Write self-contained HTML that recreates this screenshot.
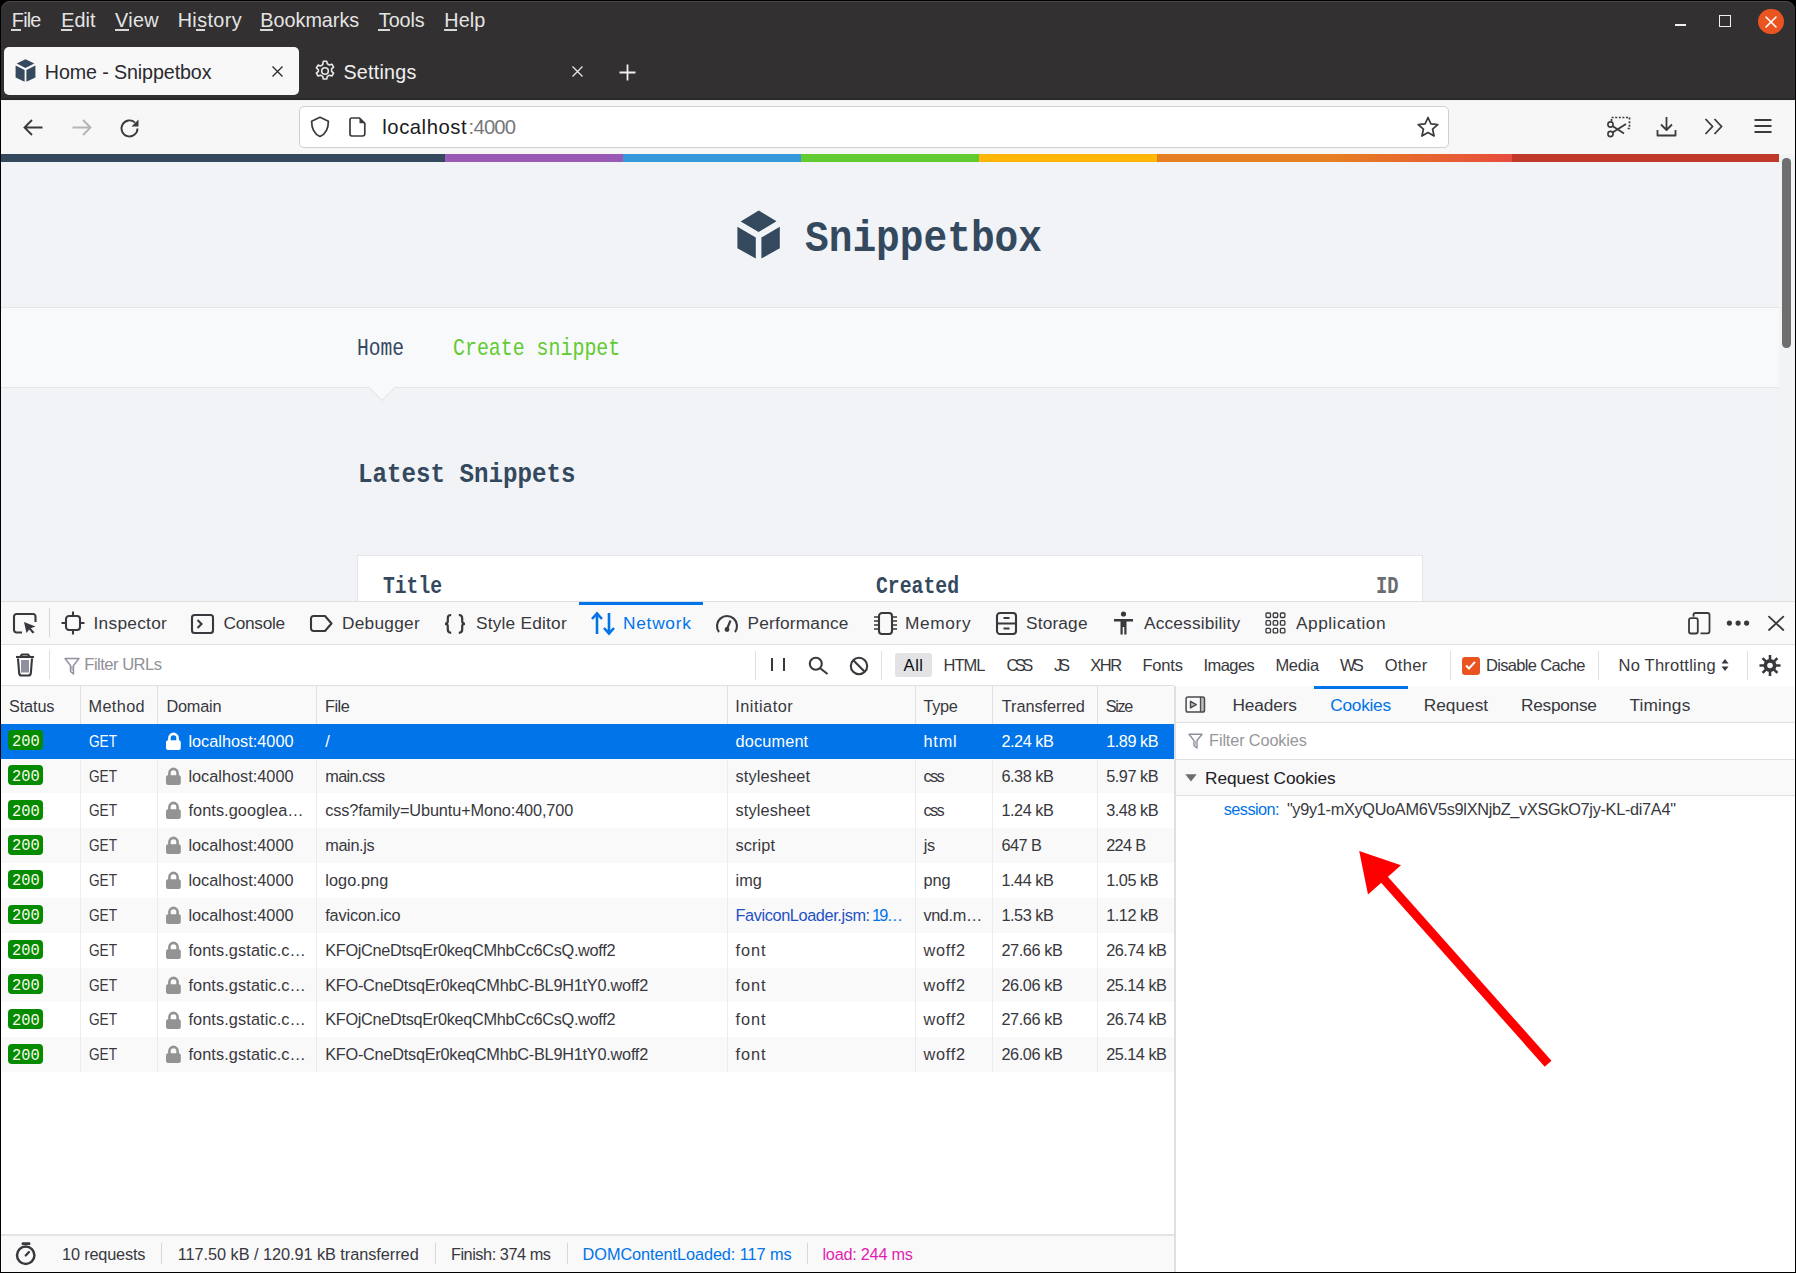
<!DOCTYPE html>
<html><head><meta charset="utf-8">
<style>
*{margin:0;padding:0;box-sizing:border-box}
html,body{width:1796px;height:1273px;overflow:hidden;background:#000}
body{position:relative;font-family:"Liberation Sans",sans-serif}
.a{position:absolute}
.b{position:absolute;line-height:0;white-space:nowrap;color:#38383d}
svg{position:absolute;overflow:visible}
.ic{stroke:#38383d;fill:none;stroke-width:2.1}
.cs{position:absolute;width:1px;background:#ececef}
.rw{position:absolute;left:1px;width:1173px}
.bd{position:absolute;left:8px;width:34.8px;height:19.7px;border-radius:4px;background:#058b00}
.ul{position:absolute;height:2px;background:#d8d8d8}
</style></head><body>
<div class="a" style="left:1px;top:1px;width:1794px;height:1271px;background:#323031;border-radius:9px 9px 0 0;box-shadow:inset 0 1px 0 #4a4849"></div>

<div class="b" style="left:11.85px;top:19.84px;font-size:19.8px;color:#e4e4e4;letter-spacing:-0.793px">File</div>
<div class="ul" style="left:10.5px;top:29px;width:10.899999999999999px"></div>
<div class="b" style="left:61.20px;top:19.84px;font-size:19.8px;color:#e4e4e4;letter-spacing:0.048px">Edit</div>
<div class="ul" style="left:60.5px;top:29px;width:11.5px"></div>
<div class="b" style="left:115.00px;top:19.84px;font-size:19.8px;color:#e4e4e4;letter-spacing:0.343px">View</div>
<div class="ul" style="left:114.5px;top:29px;width:14.5px"></div>
<div class="b" style="left:177.70px;top:19.84px;font-size:19.8px;color:#e4e4e4;letter-spacing:0.387px">History</div>
<div class="ul" style="left:196px;top:29px;width:9px"></div>
<div class="b" style="left:260.30px;top:19.84px;font-size:19.8px;color:#e4e4e4">Bookmarks</div>
<div class="ul" style="left:260px;top:29px;width:13px"></div>
<div class="b" style="left:378.80px;top:19.84px;font-size:19.8px;color:#e4e4e4;letter-spacing:-0.058px">Tools</div>
<div class="ul" style="left:378px;top:29px;width:12px"></div>
<div class="b" style="left:444.30px;top:19.84px;font-size:19.8px;color:#e4e4e4;letter-spacing:0.070px">Help</div>
<div class="ul" style="left:444px;top:29px;width:13px"></div>
<div class="a" style="left:1675px;top:24px;width:11px;height:2px;background:#f0f0f0"></div>
<div class="a" style="left:1719px;top:15px;width:12px;height:12px;border:1.6px solid #f0f0f0"></div>
<div class="a" style="left:1758px;top:8.5px;width:25.5px;height:25.5px;border-radius:50%;background:#e95420"></div>
<svg style="left:1765px;top:16px" width="12" height="12"><path d="M1 1L11 11M11 1L1 11" stroke="#fff" stroke-width="1.6" stroke-linecap="round"/></svg>
<div class="a" style="left:4px;top:46.5px;width:295px;height:48px;background:#f8f8f8;border-radius:5px"></div>
<svg style="left:15px;top:59px" width="21" height="23" viewBox="0 0 21 23"><path fill="#34495e" d="M10.5 0.3L19.3 4.6L10.5 9L1.7 4.6Z M0.6 6.6L9.6 11V22.8L0.6 18.4Z M11.4 11L20.4 6.6V18.4L11.4 22.8Z"/></svg>
<svg style="left:272px;top:65.5px" width="11" height="11"><path d="M0.5 0.5L10.5 10.5M10.5 0.5L0.5 10.5" stroke="#2a2a2e" stroke-width="1.3"/></svg>
<svg style="left:314px;top:60px" width="22" height="22" viewBox="0 0 22 22"><g fill="none" stroke="#e8e8e8" stroke-width="1.6"><circle cx="11" cy="11" r="3.3"/><path d="M9.3 1.2h3.4l0.6 2.6 2.1 1.2 2.5-0.8 1.7 2.9-2 1.8v2.4l2 1.8-1.7 2.9-2.5-0.8-2.1 1.2-0.6 2.6H9.3l-0.6-2.6-2.1-1.2-2.5 0.8-1.7-2.9 2-1.8V9.8l-2-1.8 1.7-2.9 2.5 0.8 2.1-1.2Z" stroke-linejoin="round"/></g></svg>
<svg style="left:572px;top:65.5px" width="11" height="11"><path d="M0.5 0.5L10.5 10.5M10.5 0.5L0.5 10.5" stroke="#e8e8e8" stroke-width="1.3"/></svg>
<svg style="left:619px;top:63.5px" width="17" height="17"><path d="M8.5 0.5V16.5M0.5 8.5H16.5" stroke="#f0f0f0" stroke-width="1.8"/></svg>

<div class="b" style="left:44.80px;top:71.87px;font-size:19.7px;color:#2b2a30;letter-spacing:-0.114px">Home - Snippetbox</div>
<div class="b" style="left:343.40px;top:71.87px;font-size:19.7px;color:#f0f0f0;letter-spacing:0.255px">Settings</div>
<div class="a" style="left:1px;top:97.5px;width:1794px;height:2px;background:#2a2929"></div><div class="a" style="left:1px;top:99.5px;width:1794px;height:54.5px;background:#f7f7f7;border-top:1px solid #ededed"></div>
<svg style="left:23px;top:119px" width="20" height="17" viewBox="0 0 20 17"><path d="M19.5 8.5H2M9 1L1.5 8.5L9 16" fill="none" stroke="#3b3b3b" stroke-width="1.9"/></svg>
<svg style="left:71.5px;top:119px" width="20" height="17" viewBox="0 0 20 17"><path d="M0.5 8.5H18M11 1L18.5 8.5L11 16" fill="none" stroke="#b5b5b8" stroke-width="1.9"/></svg>
<svg style="left:119px;top:117.5px" width="21" height="21" viewBox="0 0 21 21"><path d="M18.5 10.5A8 8 0 1 1 16 4.6" fill="none" stroke="#3b3b3b" stroke-width="1.9"/><path d="M19.5 1.5V8.5H12.5Z" fill="#3b3b3b"/></svg>
<div class="a" style="left:299px;top:105.5px;width:1150px;height:42px;background:#fff;border:1px solid #cfcfd4;border-radius:5px"></div>
<svg style="left:309px;top:116px" width="22" height="22" viewBox="0 0 22 22"><path d="M11 1.2L19.4 5.2C19.4 13 16 18.2 11 20.6C6 18.2 2.6 13 2.6 5.2Z" fill="none" stroke="#3b3b3b" stroke-width="1.7" stroke-linejoin="round"/></svg>
<svg style="left:349px;top:117px" width="17" height="20" viewBox="0 0 17 20"><path d="M2.8 1H10.5L15.8 6.3V16.8A2.2 2.2 0 0 1 13.6 19H2.8A2 2 0 0 1 1 17V3A2 2 0 0 1 2.8 1Z" fill="none" stroke="#3b3b3b" stroke-width="1.7"/><path d="M10.5 1V6.3H15.8Z" fill="#3b3b3b"/></svg>
<svg style="left:1416px;top:115.5px" width="24" height="22" viewBox="0 0 24 22"><path d="M12 1.5L14.9 7.9L21.8 8.6L16.6 13.2L18.1 20L12 16.5L5.9 20L7.4 13.2L2.2 8.6L9.1 7.9Z" fill="none" stroke="#3b3b3b" stroke-width="1.7" stroke-linejoin="round"/></svg>
<svg style="left:1606px;top:116px" width="25" height="22" viewBox="0 0 25 22"><path d="M5.5 5V1.5H23.5V12.5H20" fill="none" stroke="#3b3b3b" stroke-width="1.7" stroke-dasharray="2 1.6"/><circle cx="4.5" cy="18" r="2.6" fill="none" stroke="#3b3b3b" stroke-width="1.6"/><circle cx="4.5" cy="8.5" r="2.6" fill="none" stroke="#3b3b3b" stroke-width="1.6"/><path d="M6.5 16.5L20 8M6.5 10L18 17.5" stroke="#3b3b3b" stroke-width="1.8"/></svg>
<svg style="left:1656px;top:115.5px" width="21" height="21" viewBox="0 0 21 21"><path d="M10.5 1V14M5 8.5L10.5 14L16 8.5M1.5 14V19.5H19.5V14" fill="none" stroke="#3b3b3b" stroke-width="1.8" stroke-linejoin="round"/></svg>
<svg style="left:1704px;top:118px" width="20" height="17" viewBox="0 0 20 17"><path d="M1.5 1L8.5 8.5L1.5 16M10.5 1L17.5 8.5L10.5 16" fill="none" stroke="#3b3b3b" stroke-width="1.8"/></svg>
<svg style="left:1754px;top:119px" width="18" height="14" viewBox="0 0 18 14"><path d="M0.5 1H17.5M0.5 7H17.5M0.5 13H17.5" stroke="#3b3b3b" stroke-width="1.8"/></svg>

<div class="b" style="left:382.30px;top:127.37px;font-size:20.3px;color:#1c1b22;letter-spacing:0.527px">localhost</div>
<div class="b" style="left:468.60px;top:127.37px;font-size:20.3px;color:#77777c;letter-spacing:-0.813px">:4000</div>
<div class="a" style="left:1px;top:154px;width:1778px;height:447px;background:#F1F3F6"></div>
<div class="a" style="left:1px;top:154px;width:1778px;height:8.3px;background:linear-gradient(to right,#34495e,#34495e 25%,#9b59b6 25%,#9b59b6 35%,#3498db 35%,#3498db 45%,#62cb31 45%,#62cb31 55%,#ffb606 55%,#ffb606 65%,#e67e22 65%,#e67e22 75%,#e74c3c 85%,#e74c3c 85%,#c0392b 85%,#c0392b 100%)"></div>
<div class="a" style="left:1px;top:306.7px;width:1778px;height:81.3px;background:#F7F9FA;border-top:1.33px solid #E4E5E7;border-bottom:1.33px solid #E4E5E7"></div>
<svg style="left:737px;top:210px" width="44" height="49" viewBox="737 210 44 49"><path fill="#34495e" d="M758.75 210.5L776.5 221.3L758.6 231.9L740.7 221.5Z M737.4 226.8L755.8 237.5V258.5L737.4 248.3Z M761.4 237.5L779.8 226.8V248.3L761.4 258.5Z"/></svg>
<div class="a" style="left:372px;top:377.3px;width:20px;height:20px;background:#F7F9FA;border-left:1.33px solid #E4E5E7;border-bottom:1.33px solid #E4E5E7;transform:rotate(-45deg)"></div>
<div class="a" style="left:357px;top:555px;width:1066px;height:60px;background:#fff;border:1.33px solid #E4E5E7"></div>

<div class="b" style="left:805.00px;top:239.15px;font-size:44.8px;color:#34495e;font-weight:bold;font-family:'Liberation Mono',monospace;transform:scaleX(0.8817);transform-origin:0.00px 0">Snippetbox</div>
<div class="b" style="left:357.00px;top:349.46px;font-size:24px;color:#34495e;font-family:'Liberation Mono',monospace;transform:scaleX(0.8177);transform-origin:0.00px 0">Home</div>
<div class="b" style="left:453.20px;top:349.46px;font-size:24px;color:#62cb31;font-family:'Liberation Mono',monospace;transform:scaleX(0.8294);transform-origin:0.00px 0">Create snippet</div>
<div class="b" style="left:358.00px;top:475.29px;font-size:28.5px;color:#34495e;font-weight:bold;font-family:'Liberation Mono',monospace;transform:scaleX(0.8480);transform-origin:0.00px 0">Latest Snippets</div>
<div class="b" style="left:382.50px;top:586.66px;font-size:24px;color:#34495e;font-weight:bold;font-family:'Liberation Mono',monospace;transform:scaleX(0.8194);transform-origin:0.00px 0">Title</div>
<div class="b" style="left:875.50px;top:586.66px;font-size:24px;color:#34495e;font-weight:bold;font-family:'Liberation Mono',monospace;transform:scaleX(0.8234);transform-origin:0.00px 0">Created</div>
<div class="b" style="left:1376.00px;top:586.66px;font-size:24px;color:#6A6C6F;font-weight:bold;font-family:'Liberation Mono',monospace;transform:scaleX(0.7813);transform-origin:0.00px 0">ID</div>
<div class="a" style="left:1779px;top:154px;width:16px;height:447px;background:#f2f3f5"></div>
<div class="a" style="left:1782.4px;top:158.3px;width:8.3px;height:190px;background:#6e6e6e;border-radius:4.2px"></div>

<div class="a" style="left:1px;top:601px;width:1794px;height:671px;background:#fff;border-top:1px solid #dfdfe2"></div>
<div class="a" style="left:1px;top:602px;width:1794px;height:43px;background:#f9f9fa;border-bottom:1px solid #e0e0e2"></div>
<svg style="left:13px;top:613px" width="24" height="21" viewBox="0 0 24 21"><path d="M9 19.5H3.5A2.5 2.5 0 0 1 1 17V3.5A2.5 2.5 0 0 1 3.5 1H20A2.5 2.5 0 0 1 22.5 3.5V9" class="ic"/><path d="M11 9L22.5 13.5L17.8 15.3L21.5 19.3L19.6 20.6L16.2 16.6L13.5 20Z" fill="#38383d"/></svg>
<div class="a" style="left:48.5px;top:608px;width:1px;height:29px;background:#d7d7db"></div>
<svg style="left:61px;top:611px" width="24" height="24" viewBox="0 0 24 24"><rect x="5" y="5" width="14" height="14" rx="3" class="ic"/><path d="M12 0.5V5M12 19V23.5M0.5 12H5M19 12H23.5" class="ic"/></svg>
<svg style="left:191px;top:613.5px" width="23" height="20" viewBox="0 0 23 20"><rect x="1" y="1" width="21" height="18" rx="2.5" class="ic"/><path d="M6.5 6L10.5 10L6.5 14" class="ic"/></svg>
<svg style="left:309.5px;top:615px" width="23" height="17" viewBox="0 0 23 17"><path d="M1 3.5A2.5 2.5 0 0 1 3.5 1H15L21.5 8.5L15 16H3.5A2.5 2.5 0 0 1 1 13.5Z" class="ic" stroke-linejoin="round"/></svg>
<svg style="left:444px;top:613.5px" width="23" height="20" viewBox="0 0 23 20"><path d="M7.2 1C4.6 1 3.8 2 3.8 4.3V7.3C3.8 9 3 9.8 1 9.8C3 9.8 3.8 10.6 3.8 12.3V15.5C3.8 17.8 4.6 18.8 7.2 18.8M14.8 1C17.4 1 18.2 2 18.2 4.3V7.3C18.2 9 19 9.8 21 9.8C19 9.8 18.2 10.6 18.2 12.3V15.5C18.2 17.8 17.4 18.8 14.8 18.8" fill="none" stroke="#38383d" stroke-width="2.2"/></svg>
<div class="a" style="left:579px;top:602px;width:124px;height:3px;background:#0074e8"></div>
<svg style="left:591px;top:612px" width="24" height="23" viewBox="0 0 24 23"><path d="M6 22V2M1 7L6 1.5L11 7M18 1V21M13 16L18 21.5L23 16" fill="none" stroke="#0074e8" stroke-width="2.6"/></svg>
<svg style="left:715px;top:612px" width="24" height="22" viewBox="0 0 24 22"><path d="M4 20A10 10 0 1 1 20 20" class="ic"/><path d="M12 17L15.5 8.5" class="ic"/><circle cx="12" cy="17.5" r="2.4" fill="#38383d"/></svg>
<svg style="left:872.5px;top:612px" width="25" height="23" viewBox="0 0 25 23"><rect x="6" y="1" width="13" height="21" rx="3" class="ic"/><path d="M1 5H6M1 9H6M1 13H6M1 17H6M19 5H24M19 9H24M19 13H24M19 17H24" stroke="#38383d" stroke-width="1.3"/></svg>
<svg style="left:996px;top:612px" width="21" height="23" viewBox="0 0 21 23"><rect x="1" y="1" width="19" height="21" rx="3" class="ic"/><path d="M1 11.5H20M7.5 6H13.5M7.5 16.5H13.5" class="ic"/></svg>
<svg style="left:1113px;top:611px" width="21" height="24" viewBox="0 0 21 24"><circle cx="10.5" cy="3" r="2.6" fill="#38383d"/><path d="M1 8H20V10.5H13.5V23.5H11.3V16H9.7V23.5H7.5V10.5H1Z" fill="#38383d"/></svg>
<svg style="left:1265px;top:612px" width="21" height="22" viewBox="0 0 21 22"><g fill="none" stroke="#38383d" stroke-width="1.3"><rect x="1" y="1" width="4.5" height="4.5" rx="1"/><rect x="8.2" y="1" width="4.5" height="4.5" rx="1"/><rect x="15.4" y="1" width="4.5" height="4.5" rx="1"/><rect x="1" y="8.7" width="4.5" height="4.5" rx="1"/><rect x="8.2" y="8.7" width="4.5" height="4.5" rx="1"/><rect x="15.4" y="8.7" width="4.5" height="4.5" rx="1"/><rect x="1" y="16.4" width="4.5" height="4.5" rx="1"/><rect x="8.2" y="16.4" width="4.5" height="4.5" rx="1"/><rect x="15.4" y="16.4" width="4.5" height="4.5" rx="1"/></g></svg>
<svg style="left:0;top:0" width="1796" height="700" viewBox="0 0 1796 700"><rect x="1689" y="618.2" width="8.8" height="15.3" rx="2" fill="none" stroke="#38383d" stroke-width="1.8"/><path d="M1693.5 616.8V615A2 2 0 0 1 1695.5 613H1707.5A2 2 0 0 1 1709.5 615V631.3A2 2 0 0 1 1707.5 633.3H1700.5" fill="none" stroke="#38383d" stroke-width="1.8"/><circle cx="1729.4" cy="623.1" r="2.6" fill="#38383d"/><circle cx="1738.1" cy="623.1" r="2.6" fill="#38383d"/><circle cx="1746.6" cy="623.1" r="2.6" fill="#38383d"/><path d="M1769 616.6L1783.3 630M1783.3 616.6L1769 630" stroke="#38383d" stroke-width="1.8" stroke-linecap="round"/></svg>

<div class="b" style="left:93.50px;top:623.31px;font-size:17.3px;color:#38383d;letter-spacing:0.276px">Inspector</div>
<div class="b" style="left:223.50px;top:623.31px;font-size:17.3px;color:#38383d;letter-spacing:-0.282px">Console</div>
<div class="b" style="left:342.00px;top:623.31px;font-size:17.3px;color:#38383d;letter-spacing:0.250px">Debugger</div>
<div class="b" style="left:475.90px;top:623.31px;font-size:17.3px;color:#38383d;letter-spacing:0.219px">Style Editor</div>
<div class="b" style="left:623.10px;top:623.31px;font-size:17.3px;color:#0074e8;letter-spacing:0.720px">Network</div>
<div class="b" style="left:747.40px;top:623.31px;font-size:17.3px;color:#38383d;letter-spacing:0.216px">Performance</div>
<div class="b" style="left:905.10px;top:623.31px;font-size:17.3px;color:#38383d;letter-spacing:0.609px">Memory</div>
<div class="b" style="left:1026.00px;top:623.31px;font-size:17.3px;color:#38383d;letter-spacing:0.161px">Storage</div>
<div class="b" style="left:1144.00px;top:623.31px;font-size:17.3px;color:#38383d;letter-spacing:0.175px">Accessibility</div>
<div class="b" style="left:1296.00px;top:623.31px;font-size:17.3px;color:#38383d;letter-spacing:0.500px">Application</div>
<svg style="left:15px;top:652px" width="20" height="25" viewBox="0 0 20 25"><path d="M5.5 4.5L7 2.5H13L14.5 4.5" class="ic"/><path d="M1 5H19" class="ic" stroke-width="2"/><path d="M3 6.5L4.2 21.5A2.5 2.5 0 0 0 6.7 23.5H13.3A2.5 2.5 0 0 0 15.8 21.5L17 6.5" class="ic" stroke-width="2.2"/><rect x="6" y="8" width="8" height="12.5" fill="#8f8f9d"/></svg>
<div class="a" style="left:48.5px;top:650px;width:1px;height:29px;background:#e0e0e2"></div>
<svg style="left:64px;top:656.5px" width="16" height="18" viewBox="0 0 16 18"><path d="M1 1.5H15L9.5 8.5V17L6.5 14.5V8.5Z" fill="none" stroke="#8f8f9d" stroke-width="1.4" stroke-linejoin="round"/><path d="M7 9H9.2V14.5L7 12.8Z" fill="#b9b9c0"/></svg>
<div class="a" style="left:754.5px;top:650.5px;width:1px;height:29px;background:#e0e0e2"></div>
<div class="a" style="left:770.5px;top:658px;width:2.2px;height:13px;background:#38383d"></div>
<div class="a" style="left:782.5px;top:658px;width:2.2px;height:13px;background:#38383d"></div>
<svg style="left:807.5px;top:656px" width="22" height="19" viewBox="0 0 22 19"><circle cx="7.8" cy="7.8" r="6" class="ic" stroke-width="2.2"/><path d="M12.2 12.2L19.5 18" class="ic" stroke-width="2.6"/></svg>
<svg style="left:849px;top:656px" width="20" height="20" viewBox="0 0 20 20"><circle cx="10" cy="10" r="8.2" class="ic" stroke-width="2.6"/><path d="M4.3 4.3L15.7 15.7" class="ic" stroke-width="2.6"/></svg>
<div class="a" style="left:881px;top:650.5px;width:1px;height:29px;background:#e0e0e2"></div>
<div class="a" style="left:895px;top:653px;width:37px;height:24px;background:#e3e3e6;border-radius:3px"></div>
<div class="a" style="left:1449.5px;top:650.5px;width:1px;height:29px;background:#e0e0e2"></div>
<div class="a" style="left:1461.5px;top:656.5px;width:18px;height:18px;background:#e95420;border-radius:3px"></div>
<svg style="left:1463px;top:658px" width="15" height="15" viewBox="0 0 15 15"><path d="M3 7.5L6 10.5L12 3.8" fill="none" stroke="#fff" stroke-width="2"/></svg>
<div class="a" style="left:1598px;top:650.5px;width:1px;height:29px;background:#e0e0e2"></div>
<svg style="left:1721px;top:658px" width="8" height="14" viewBox="0 0 8 14"><path d="M4 1L7.5 5.5H0.5Z M4 13L7.5 8.5H0.5Z" fill="#38383d"/></svg>
<div class="a" style="left:1747px;top:650.5px;width:1px;height:29px;background:#e0e0e2"></div>
<svg style="left:1759px;top:654px" width="22" height="23" viewBox="0 0 22 23"><g fill="#38383d"><circle cx="11" cy="11.5" r="6.5"/></g><g stroke="#38383d" stroke-width="2.6"><path d="M11 1V22M0.5 11.5H21.5M3.6 4.1L18.4 18.9M18.4 4.1L3.6 18.9"/></g><circle cx="11" cy="11.5" r="2.8" fill="#f9f9fa"/></svg>

<div class="b" style="left:84.30px;top:664.65px;font-size:16.6px;color:#909096;letter-spacing:-0.520px">Filter URLs</div>
<div class="b" style="left:903.60px;top:664.68px;font-size:16.5px;color:#0c0c0d;letter-spacing:0.542px">All</div>
<div class="b" style="left:943.50px;top:664.68px;font-size:16.5px;color:#38383d;letter-spacing:-0.960px">HTML</div>
<div class="b" style="left:1006.40px;top:664.68px;font-size:16.5px;color:#38383d;letter-spacing:-3.504px">CSS</div>
<div class="b" style="left:1054.00px;top:664.68px;font-size:16.5px;color:#38383d;letter-spacing:-3.223px">JS</div>
<div class="b" style="left:1090.30px;top:664.68px;font-size:16.5px;color:#38383d;letter-spacing:-1.458px">XHR</div>
<div class="b" style="left:1142.40px;top:664.68px;font-size:16.5px;color:#38383d;letter-spacing:-0.162px">Fonts</div>
<div class="b" style="left:1203.50px;top:664.68px;font-size:16.5px;color:#38383d;letter-spacing:-0.564px">Images</div>
<div class="b" style="left:1275.40px;top:664.68px;font-size:16.5px;color:#38383d;letter-spacing:-0.311px">Media</div>
<div class="b" style="left:1340.00px;top:664.68px;font-size:16.5px;color:#38383d;letter-spacing:-2.865px">WS</div>
<div class="b" style="left:1384.70px;top:664.68px;font-size:16.5px;color:#38383d;letter-spacing:0.312px">Other</div>
<div class="b" style="left:1485.90px;top:664.68px;font-size:16.5px;color:#38383d;letter-spacing:-0.653px">Disable Cache</div>
<div class="b" style="left:1618.50px;top:664.68px;font-size:16.5px;color:#38383d;letter-spacing:0.247px">No Throttling</div>
<div class="a" style="left:1px;top:686px;width:1173px;height:37.7px;background:#f9f9fa"></div>
<div class="b" style="left:9.00px;top:706.15px;font-size:16.3px;color:#38383d;letter-spacing:-0.142px">Status</div>
<div class="b" style="left:88.50px;top:706.15px;font-size:16.3px;color:#38383d;letter-spacing:0.368px">Method</div>
<div class="b" style="left:166.40px;top:706.15px;font-size:16.3px;color:#38383d;letter-spacing:-0.211px">Domain</div>
<div class="b" style="left:325.00px;top:706.15px;font-size:16.3px;color:#38383d;letter-spacing:-0.481px">File</div>
<div class="b" style="left:735.20px;top:706.15px;font-size:16.3px;color:#38383d;letter-spacing:0.517px">Initiator</div>
<div class="b" style="left:923.60px;top:706.15px;font-size:16.3px;color:#38383d;letter-spacing:-0.357px">Type</div>
<div class="b" style="left:1001.70px;top:706.15px;font-size:16.3px;color:#38383d;letter-spacing:-0.032px">Transferred</div>
<div class="b" style="left:1105.80px;top:706.15px;font-size:16.3px;color:#38383d;letter-spacing:-1.368px">Size</div>
<div class="rw" style="top:723.70px;height:34.85px;background:#0074e8"></div>
<div class="rw" style="top:758.55px;height:34.85px;background:#f9f9fa"></div>
<div class="rw" style="top:793.40px;height:34.85px;background:#fff"></div>
<div class="rw" style="top:828.25px;height:34.85px;background:#f9f9fa"></div>
<div class="rw" style="top:863.10px;height:34.85px;background:#fff"></div>
<div class="rw" style="top:897.95px;height:34.85px;background:#f9f9fa"></div>
<div class="rw" style="top:932.80px;height:34.85px;background:#fff"></div>
<div class="rw" style="top:967.65px;height:34.85px;background:#f9f9fa"></div>
<div class="rw" style="top:1002.50px;height:34.85px;background:#fff"></div>
<div class="rw" style="top:1037.35px;height:34.85px;background:#f9f9fa"></div>
<div class="cs" style="left:79.7px;top:686px;height:37.7px;background:#e0e0e2"></div>
<div class="cs" style="left:79.7px;top:758.6px;height:313.7px"></div>
<div class="cs" style="left:157.2px;top:686px;height:37.7px;background:#e0e0e2"></div>
<div class="cs" style="left:157.2px;top:758.6px;height:313.7px"></div>
<div class="cs" style="left:315.9px;top:686px;height:37.7px;background:#e0e0e2"></div>
<div class="cs" style="left:315.9px;top:758.6px;height:313.7px"></div>
<div class="cs" style="left:727.1px;top:686px;height:37.7px;background:#e0e0e2"></div>
<div class="cs" style="left:727.1px;top:758.6px;height:313.7px"></div>
<div class="cs" style="left:914.8px;top:686px;height:37.7px;background:#e0e0e2"></div>
<div class="cs" style="left:914.8px;top:758.6px;height:313.7px"></div>
<div class="cs" style="left:992.0px;top:686px;height:37.7px;background:#e0e0e2"></div>
<div class="cs" style="left:992.0px;top:758.6px;height:313.7px"></div>
<div class="cs" style="left:1097.0px;top:686px;height:37.7px;background:#e0e0e2"></div>
<div class="cs" style="left:1097.0px;top:758.6px;height:313.7px"></div>
<div class="a" style="left:1px;top:685px;width:1173px;height:1px;background:#e0e0e2"></div>
<div class="bd" style="top:730.40px"></div>
<div class="b" style="left:12.40px;top:741.93px;font-size:16.8px;color:#fafaf0;font-family:'Liberation Mono',monospace;transform:scaleX(0.9160);transform-origin:0.00px 0">200</div>
<div class="b" style="left:88.80px;top:740.65px;font-size:16.3px;color:#fff;transform:scaleX(0.8389);transform-origin:0.00px 0">GET</div>
<svg style="left:166px;top:731.70px" width="15" height="18" viewBox="0 0 15 18"><path d="M3.4 9V6A4.1 4.1 0 0 1 11.6 6V9" fill="none" stroke="#fff" stroke-width="2.6"/><rect x="0" y="8.3" width="14.8" height="9.6" rx="2" fill="#fff"/></svg>
<div class="b" style="left:188.40px;top:740.65px;font-size:16.3px;color:#fff;letter-spacing:0.013px">localhost:4000</div>
<div class="b" style="left:325.20px;top:740.65px;font-size:16.3px;color:#fff">/</div>
<div class="b" style="left:735.50px;top:740.65px;font-size:16.3px;color:#fff;letter-spacing:0.163px">document</div>
<div class="b" style="left:923.40px;top:740.65px;font-size:16.3px;color:#fff;letter-spacing:0.864px">html</div>
<div class="b" style="left:1001.40px;top:740.65px;font-size:16.3px;color:#fff;letter-spacing:-0.460px">2.24 kB</div>
<div class="b" style="left:1106.20px;top:740.65px;font-size:16.3px;color:#fff;letter-spacing:-0.460px">1.89 kB</div>
<div class="bd" style="top:765.25px"></div>
<div class="b" style="left:12.40px;top:776.78px;font-size:16.8px;color:#fafaf0;font-family:'Liberation Mono',monospace;transform:scaleX(0.9160);transform-origin:0.00px 0">200</div>
<div class="b" style="left:88.80px;top:775.50px;font-size:16.3px;color:#38383d;transform:scaleX(0.8389);transform-origin:0.00px 0">GET</div>
<svg style="left:166px;top:766.55px" width="15" height="18" viewBox="0 0 15 18"><path d="M3.4 9V6A4.1 4.1 0 0 1 11.6 6V9" fill="none" stroke="#939393" stroke-width="2.6"/><rect x="0" y="8.3" width="14.8" height="9.6" rx="2" fill="#939393"/></svg>
<div class="b" style="left:188.40px;top:775.50px;font-size:16.3px;color:#38383d;letter-spacing:0.013px">localhost:4000</div>
<div class="b" style="left:325.20px;top:775.50px;font-size:16.3px;color:#38383d;letter-spacing:-0.600px">main.css</div>
<div class="b" style="left:735.50px;top:775.50px;font-size:16.3px;color:#38383d;letter-spacing:0.141px">stylesheet</div>
<div class="b" style="left:923.40px;top:775.50px;font-size:16.3px;color:#38383d;letter-spacing:-1.575px">css</div>
<div class="b" style="left:1001.40px;top:775.50px;font-size:16.3px;color:#38383d;letter-spacing:-0.460px">6.38 kB</div>
<div class="b" style="left:1106.20px;top:775.50px;font-size:16.3px;color:#38383d;letter-spacing:-0.460px">5.97 kB</div>
<div class="bd" style="top:800.10px"></div>
<div class="b" style="left:12.40px;top:811.63px;font-size:16.8px;color:#fafaf0;font-family:'Liberation Mono',monospace;transform:scaleX(0.9160);transform-origin:0.00px 0">200</div>
<div class="b" style="left:88.80px;top:810.35px;font-size:16.3px;color:#38383d;transform:scaleX(0.8389);transform-origin:0.00px 0">GET</div>
<svg style="left:166px;top:801.40px" width="15" height="18" viewBox="0 0 15 18"><path d="M3.4 9V6A4.1 4.1 0 0 1 11.6 6V9" fill="none" stroke="#939393" stroke-width="2.6"/><rect x="0" y="8.3" width="14.8" height="9.6" rx="2" fill="#939393"/></svg>
<div class="b" style="left:188.40px;top:810.35px;font-size:16.3px;color:#38383d;letter-spacing:0.086px">fonts.googlea…</div>
<div class="b" style="left:325.20px;top:810.35px;font-size:16.3px;color:#38383d;letter-spacing:-0.121px">css?family=Ubuntu+Mono:400,700</div>
<div class="b" style="left:735.50px;top:810.35px;font-size:16.3px;color:#38383d;letter-spacing:0.141px">stylesheet</div>
<div class="b" style="left:923.40px;top:810.35px;font-size:16.3px;color:#38383d;letter-spacing:-1.575px">css</div>
<div class="b" style="left:1001.40px;top:810.35px;font-size:16.3px;color:#38383d;letter-spacing:-0.460px">1.24 kB</div>
<div class="b" style="left:1106.20px;top:810.35px;font-size:16.3px;color:#38383d;letter-spacing:-0.460px">3.48 kB</div>
<div class="bd" style="top:834.95px"></div>
<div class="b" style="left:12.40px;top:846.48px;font-size:16.8px;color:#fafaf0;font-family:'Liberation Mono',monospace;transform:scaleX(0.9160);transform-origin:0.00px 0">200</div>
<div class="b" style="left:88.80px;top:845.20px;font-size:16.3px;color:#38383d;transform:scaleX(0.8389);transform-origin:0.00px 0">GET</div>
<svg style="left:166px;top:836.25px" width="15" height="18" viewBox="0 0 15 18"><path d="M3.4 9V6A4.1 4.1 0 0 1 11.6 6V9" fill="none" stroke="#939393" stroke-width="2.6"/><rect x="0" y="8.3" width="14.8" height="9.6" rx="2" fill="#939393"/></svg>
<div class="b" style="left:188.40px;top:845.20px;font-size:16.3px;color:#38383d;letter-spacing:0.013px">localhost:4000</div>
<div class="b" style="left:325.20px;top:845.20px;font-size:16.3px;color:#38383d;letter-spacing:-0.345px">main.js</div>
<div class="b" style="left:735.50px;top:845.20px;font-size:16.3px;color:#38383d;letter-spacing:0.129px">script</div>
<div class="b" style="left:923.81px;top:845.20px;font-size:16.3px;color:#38383d;letter-spacing:-0.344px">js</div>
<div class="b" style="left:1001.40px;top:845.20px;font-size:16.3px;color:#38383d;letter-spacing:-0.506px">647 B</div>
<div class="b" style="left:1106.20px;top:845.20px;font-size:16.3px;color:#38383d;letter-spacing:-0.656px">224 B</div>
<div class="bd" style="top:869.80px"></div>
<div class="b" style="left:12.40px;top:881.33px;font-size:16.8px;color:#fafaf0;font-family:'Liberation Mono',monospace;transform:scaleX(0.9160);transform-origin:0.00px 0">200</div>
<div class="b" style="left:88.80px;top:880.05px;font-size:16.3px;color:#38383d;transform:scaleX(0.8389);transform-origin:0.00px 0">GET</div>
<svg style="left:166px;top:871.10px" width="15" height="18" viewBox="0 0 15 18"><path d="M3.4 9V6A4.1 4.1 0 0 1 11.6 6V9" fill="none" stroke="#939393" stroke-width="2.6"/><rect x="0" y="8.3" width="14.8" height="9.6" rx="2" fill="#939393"/></svg>
<div class="b" style="left:188.40px;top:880.05px;font-size:16.3px;color:#38383d;letter-spacing:0.013px">localhost:4000</div>
<div class="b" style="left:325.20px;top:880.05px;font-size:16.3px;color:#38383d;letter-spacing:0.084px">logo.png</div>
<div class="b" style="left:735.50px;top:880.05px;font-size:16.3px;color:#38383d;letter-spacing:0.028px">img</div>
<div class="b" style="left:923.40px;top:880.05px;font-size:16.3px;color:#38383d;letter-spacing:-0.060px">png</div>
<div class="b" style="left:1001.40px;top:880.05px;font-size:16.3px;color:#38383d;letter-spacing:-0.460px">1.44 kB</div>
<div class="b" style="left:1106.20px;top:880.05px;font-size:16.3px;color:#38383d;letter-spacing:-0.460px">1.05 kB</div>
<div class="bd" style="top:904.65px"></div>
<div class="b" style="left:12.40px;top:916.18px;font-size:16.8px;color:#fafaf0;font-family:'Liberation Mono',monospace;transform:scaleX(0.9160);transform-origin:0.00px 0">200</div>
<div class="b" style="left:88.80px;top:914.90px;font-size:16.3px;color:#38383d;transform:scaleX(0.8389);transform-origin:0.00px 0">GET</div>
<svg style="left:166px;top:905.95px" width="15" height="18" viewBox="0 0 15 18"><path d="M3.4 9V6A4.1 4.1 0 0 1 11.6 6V9" fill="none" stroke="#939393" stroke-width="2.6"/><rect x="0" y="8.3" width="14.8" height="9.6" rx="2" fill="#939393"/></svg>
<div class="b" style="left:188.40px;top:914.90px;font-size:16.3px;color:#38383d;letter-spacing:0.013px">localhost:4000</div>
<div class="b" style="left:325.20px;top:914.90px;font-size:16.3px;color:#38383d;letter-spacing:-0.152px">favicon.ico</div>
<div class="b" style="left:735.50px;top:914.90px;font-size:16.3px;color:#1f50c4;letter-spacing:-0.384px">FaviconLoader.jsm:</div>
<div class="b" style="left:872.00px;top:914.90px;font-size:16.3px;color:#0074e8;letter-spacing:-1.697px">19…</div>
<div class="b" style="left:923.40px;top:914.90px;font-size:16.3px;color:#38383d;letter-spacing:-0.364px">vnd.m…</div>
<div class="b" style="left:1001.40px;top:914.90px;font-size:16.3px;color:#38383d;letter-spacing:-0.460px">1.53 kB</div>
<div class="b" style="left:1106.20px;top:914.90px;font-size:16.3px;color:#38383d;letter-spacing:-0.460px">1.12 kB</div>
<div class="bd" style="top:939.50px"></div>
<div class="b" style="left:12.40px;top:951.03px;font-size:16.8px;color:#fafaf0;font-family:'Liberation Mono',monospace;transform:scaleX(0.9160);transform-origin:0.00px 0">200</div>
<div class="b" style="left:88.80px;top:949.75px;font-size:16.3px;color:#38383d;transform:scaleX(0.8389);transform-origin:0.00px 0">GET</div>
<svg style="left:166px;top:940.80px" width="15" height="18" viewBox="0 0 15 18"><path d="M3.4 9V6A4.1 4.1 0 0 1 11.6 6V9" fill="none" stroke="#939393" stroke-width="2.6"/><rect x="0" y="8.3" width="14.8" height="9.6" rx="2" fill="#939393"/></svg>
<div class="b" style="left:188.40px;top:949.75px;font-size:16.3px;color:#38383d;letter-spacing:0.108px">fonts.gstatic.c…</div>
<div class="b" style="left:325.20px;top:949.75px;font-size:16.3px;color:#38383d;letter-spacing:-0.306px">KFOjCneDtsqEr0keqCMhbCc6CsQ.woff2</div>
<div class="b" style="left:735.50px;top:949.75px;font-size:16.3px;color:#38383d;letter-spacing:0.960px">font</div>
<div class="b" style="left:923.48px;top:949.75px;font-size:16.3px;color:#38383d;letter-spacing:0.722px">woff2</div>
<div class="b" style="left:1001.40px;top:949.75px;font-size:16.3px;color:#38383d;letter-spacing:-0.415px">27.66 kB</div>
<div class="b" style="left:1106.20px;top:949.75px;font-size:16.3px;color:#38383d;letter-spacing:-0.501px">26.74 kB</div>
<div class="bd" style="top:974.35px"></div>
<div class="b" style="left:12.40px;top:985.88px;font-size:16.8px;color:#fafaf0;font-family:'Liberation Mono',monospace;transform:scaleX(0.9160);transform-origin:0.00px 0">200</div>
<div class="b" style="left:88.80px;top:984.60px;font-size:16.3px;color:#38383d;transform:scaleX(0.8389);transform-origin:0.00px 0">GET</div>
<svg style="left:166px;top:975.65px" width="15" height="18" viewBox="0 0 15 18"><path d="M3.4 9V6A4.1 4.1 0 0 1 11.6 6V9" fill="none" stroke="#939393" stroke-width="2.6"/><rect x="0" y="8.3" width="14.8" height="9.6" rx="2" fill="#939393"/></svg>
<div class="b" style="left:188.40px;top:984.60px;font-size:16.3px;color:#38383d;letter-spacing:0.108px">fonts.gstatic.c…</div>
<div class="b" style="left:325.20px;top:984.60px;font-size:16.3px;color:#38383d;letter-spacing:-0.244px">KFO-CneDtsqEr0keqCMhbC-BL9H1tY0.woff2</div>
<div class="b" style="left:735.50px;top:984.60px;font-size:16.3px;color:#38383d;letter-spacing:0.960px">font</div>
<div class="b" style="left:923.48px;top:984.60px;font-size:16.3px;color:#38383d;letter-spacing:0.722px">woff2</div>
<div class="b" style="left:1001.40px;top:984.60px;font-size:16.3px;color:#38383d;letter-spacing:-0.415px">26.06 kB</div>
<div class="b" style="left:1106.20px;top:984.60px;font-size:16.3px;color:#38383d;letter-spacing:-0.501px">25.14 kB</div>
<div class="bd" style="top:1009.20px"></div>
<div class="b" style="left:12.40px;top:1020.73px;font-size:16.8px;color:#fafaf0;font-family:'Liberation Mono',monospace;transform:scaleX(0.9160);transform-origin:0.00px 0">200</div>
<div class="b" style="left:88.80px;top:1019.45px;font-size:16.3px;color:#38383d;transform:scaleX(0.8389);transform-origin:0.00px 0">GET</div>
<svg style="left:166px;top:1010.50px" width="15" height="18" viewBox="0 0 15 18"><path d="M3.4 9V6A4.1 4.1 0 0 1 11.6 6V9" fill="none" stroke="#939393" stroke-width="2.6"/><rect x="0" y="8.3" width="14.8" height="9.6" rx="2" fill="#939393"/></svg>
<div class="b" style="left:188.40px;top:1019.45px;font-size:16.3px;color:#38383d;letter-spacing:0.108px">fonts.gstatic.c…</div>
<div class="b" style="left:325.20px;top:1019.45px;font-size:16.3px;color:#38383d;letter-spacing:-0.306px">KFOjCneDtsqEr0keqCMhbCc6CsQ.woff2</div>
<div class="b" style="left:735.50px;top:1019.45px;font-size:16.3px;color:#38383d;letter-spacing:0.960px">font</div>
<div class="b" style="left:923.48px;top:1019.45px;font-size:16.3px;color:#38383d;letter-spacing:0.722px">woff2</div>
<div class="b" style="left:1001.40px;top:1019.45px;font-size:16.3px;color:#38383d;letter-spacing:-0.415px">27.66 kB</div>
<div class="b" style="left:1106.20px;top:1019.45px;font-size:16.3px;color:#38383d;letter-spacing:-0.501px">26.74 kB</div>
<div class="bd" style="top:1044.05px"></div>
<div class="b" style="left:12.40px;top:1055.58px;font-size:16.8px;color:#fafaf0;font-family:'Liberation Mono',monospace;transform:scaleX(0.9160);transform-origin:0.00px 0">200</div>
<div class="b" style="left:88.80px;top:1054.30px;font-size:16.3px;color:#38383d;transform:scaleX(0.8389);transform-origin:0.00px 0">GET</div>
<svg style="left:166px;top:1045.35px" width="15" height="18" viewBox="0 0 15 18"><path d="M3.4 9V6A4.1 4.1 0 0 1 11.6 6V9" fill="none" stroke="#939393" stroke-width="2.6"/><rect x="0" y="8.3" width="14.8" height="9.6" rx="2" fill="#939393"/></svg>
<div class="b" style="left:188.40px;top:1054.30px;font-size:16.3px;color:#38383d;letter-spacing:0.108px">fonts.gstatic.c…</div>
<div class="b" style="left:325.20px;top:1054.30px;font-size:16.3px;color:#38383d;letter-spacing:-0.244px">KFO-CneDtsqEr0keqCMhbC-BL9H1tY0.woff2</div>
<div class="b" style="left:735.50px;top:1054.30px;font-size:16.3px;color:#38383d;letter-spacing:0.960px">font</div>
<div class="b" style="left:923.48px;top:1054.30px;font-size:16.3px;color:#38383d;letter-spacing:0.722px">woff2</div>
<div class="b" style="left:1001.40px;top:1054.30px;font-size:16.3px;color:#38383d;letter-spacing:-0.415px">26.06 kB</div>
<div class="b" style="left:1106.20px;top:1054.30px;font-size:16.3px;color:#38383d;letter-spacing:-0.501px">25.14 kB</div>
<div class="a" style="left:1174px;top:686px;width:2px;height:586px;background:#e0e0e2"></div>
<div class="a" style="left:1176px;top:686px;width:619px;height:37px;background:#f9f9fa;border-bottom:1px solid #e0e0e2"></div>
<svg style="left:0;top:0" width="1796" height="730" viewBox="0 0 1796 730"><rect x="1200.5" y="697" width="4" height="15" fill="#bdbdbd"/><rect x="1186.1" y="696.9" width="18.4" height="15.1" rx="1.8" fill="none" stroke="#4a4a4f" stroke-width="1.5"/><path d="M1200.5 696.9V712" stroke="#4a4a4f" stroke-width="1.3"/><path d="M1190.5 701.3L1196.3 704.6L1190.5 707.9Z" fill="#bdbdbd" stroke="#4a4a4f" stroke-width="1.4" stroke-linejoin="round"/></svg>
<div class="a" style="left:1313.5px;top:686px;width:94.5px;height:3px;background:#0074e8"></div>
<svg style="left:1188px;top:733px" width="15" height="16" viewBox="0 0 15 16"><path d="M1 1.2H14L9 7.5V15L6 12.8V7.5Z" fill="none" stroke="#8f8f9d" stroke-width="1.4" stroke-linejoin="round"/><path d="M6.5 8H8.5V13L6.5 11.6Z" fill="#b9b9c0"/></svg>
<div class="a" style="left:1176px;top:758.5px;width:619px;height:1px;background:#e0e0e2"></div>
<div class="a" style="left:1176px;top:759.5px;width:619px;height:36px;background:#f9f9fa;border-bottom:1px solid #e0e0e2"></div>
<svg style="left:1185px;top:773.5px" width="12" height="8" viewBox="0 0 12 8"><path d="M0.3 0.3H11.7L6 7.6Z" fill="#6b6b70"/></svg>

<div class="b" style="left:1232.40px;top:704.51px;font-size:17.3px;color:#38383d;letter-spacing:-0.132px">Headers</div>
<div class="b" style="left:1330.30px;top:704.51px;font-size:17.3px;color:#0074e8;letter-spacing:-0.273px">Cookies</div>
<div class="b" style="left:1423.70px;top:704.51px;font-size:17.3px;color:#38383d;letter-spacing:0.010px">Request</div>
<div class="b" style="left:1521.00px;top:704.51px;font-size:17.3px;color:#38383d;letter-spacing:-0.277px">Response</div>
<div class="b" style="left:1629.40px;top:704.51px;font-size:17.3px;color:#38383d;letter-spacing:0.176px">Timings</div>
<div class="b" style="left:1209.10px;top:740.45px;font-size:16.3px;color:#97979c;letter-spacing:-0.137px">Filter Cookies</div>
<div class="b" style="left:1205.10px;top:777.61px;font-size:17.3px;color:#202024;letter-spacing:-0.081px">Request Cookies</div>
<div class="b" style="left:1223.80px;top:809.35px;font-size:16.3px;color:#0074e8;letter-spacing:-0.574px">session:</div>
<div class="b" style="left:1286.90px;top:809.35px;font-size:16.3px;color:#38383d;letter-spacing:-0.305px">"y9y1-mXyQUoAM6V5s9lXNjbZ_vXSGkO7jy-KL-di7A4"</div>
<div class="a" style="left:1px;top:1234px;width:1173px;height:38px;background:#f9f9fa;border-top:2px solid #e4e4e6"></div>
<svg style="left:0;top:1230px" width="60" height="43" viewBox="0 1230 60 43"><circle cx="25.7" cy="1255.2" r="8.7" fill="none" stroke="#38383d" stroke-width="2.5"/><rect x="21.6" y="1242.3" width="8.8" height="2.8" rx="1.2" fill="#38383d"/><path d="M25.7 1255.5L29 1252" stroke="#38383d" stroke-width="2.2" stroke-linecap="round"/></svg>
<div class="a" style="left:160.5px;top:1243px;width:1px;height:21px;background:#d7d7db"></div>
<div class="a" style="left:435px;top:1243px;width:1px;height:21px;background:#d7d7db"></div>
<div class="a" style="left:567px;top:1243px;width:1px;height:21px;background:#d7d7db"></div>
<div class="a" style="left:807px;top:1243px;width:1px;height:21px;background:#d7d7db"></div>

<div class="b" style="left:62.00px;top:1254.45px;font-size:16.3px;color:#38383d;letter-spacing:-0.157px">10 requests</div>
<div class="b" style="left:177.70px;top:1254.45px;font-size:16.3px;color:#38383d;letter-spacing:-0.039px">117.50 kB / 120.91 kB transferred</div>
<div class="b" style="left:450.90px;top:1254.45px;font-size:16.3px;color:#38383d;letter-spacing:-0.449px">Finish: 374 ms</div>
<div class="b" style="left:582.60px;top:1254.45px;font-size:16.3px;color:#0074e8;letter-spacing:-0.067px">DOMContentLoaded: 117 ms</div>
<div class="b" style="left:822.50px;top:1254.45px;font-size:16.3px;color:#e01fb0;letter-spacing:-0.256px">load: 244 ms</div>
<svg style="left:0;top:0" width="1796" height="1273" viewBox="0 0 1796 1273"><path d="M1548.1 1063.7L1378.3 872.8" stroke="#ff0000" stroke-width="9"/><path d="M1359.2 851L1401 865.3L1368 894.4Z" fill="#ff0000"/></svg>
</body></html>
